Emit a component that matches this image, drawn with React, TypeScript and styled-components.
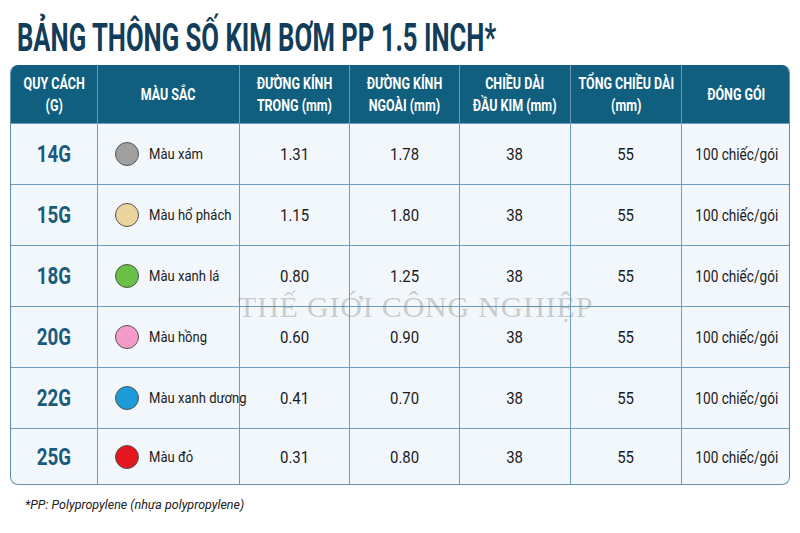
import { Fragment } from "react";
import styled, { createGlobalStyle } from "styled-components";

const GlobalStyle = createGlobalStyle`
  html, body {
    margin: 0;
    padding: 0;
    background: #ffffff;
  }
  body {
    font-family: Roboto, "Liberation Sans", sans-serif;
  }
`;

const Page = styled.div`
  width: 800px;
  height: 533px;
  padding: 19px 10px 0 10px;
  box-sizing: border-box;
  position: relative;
  overflow: hidden;
`;

const Title = styled.h1`
  margin: 0 0 0 7px;
  height: 46px;
  font-family: Roboto, "Liberation Sans", sans-serif;
  font-weight: 700;
  font-size: 38px;
  line-height: 38px;
  color: #123d5a;
  white-space: nowrap;
  transform: scaleX(0.675);
  transform-origin: left center;
`;

const Table = styled.div`
  display: grid;
  grid-template-columns: 87px 142px 110px 110px 111px 111px 109px;
  width: 780px;
  border: 1px solid #5f8fac;
  border-top: none;
  border-radius: 8px;
  overflow: hidden;
  background: #f2f7fb;
  box-sizing: border-box;
`;

const HeadCell = styled.div<{ $end?: boolean }>`
  height: 58px;
  box-sizing: border-box;
  padding-top: 2px;
  background: #115f7f;
  color: #ffffff;
  display: flex;
  align-items: center;
  justify-content: center;
  text-align: center;
  font-weight: 700;
  font-size: 16px;
  line-height: 22px;
  border-right: ${(p) => (p.$end ? "none" : "1px solid #6b98b2")};
`;

const Squeeze = styled.span<{ $ratio?: number }>`
  display: inline-block;
  transform: scaleX(${(p) => p.$ratio ?? 0.8});
  white-space: nowrap;
`;

const Cell = styled.div<{ $last?: boolean; $end?: boolean }>`
  height: ${(p) => (p.$last ? 56 : 61)}px;
  box-sizing: border-box;
  display: flex;
  align-items: center;
  justify-content: center;
  border-top: 1px solid #6f9dbb;
  border-right: ${(p) => (p.$end ? "none" : "1px solid #6f9dbb")};
  font-size: 17px;
  color: #1b1b1b;
`;

const SizeCell = styled(Cell)`
  font-weight: 700;
  font-size: 24px;
  color: #1a5b7c;
`;

const ColorCell = styled(Cell)`
  justify-content: flex-start;
  padding-left: 17px;
  gap: 10px;
`;

const Dot = styled.span<{ $color: string }>`
  width: 24px;
  height: 24px;
  border-radius: 50%;
  background: ${(p) => p.$color};
  border: 1px solid #555;
  box-sizing: border-box;
  flex: none;
`;

const ColorName = styled.span`
  font-size: 15px;
  display: inline-block;
  transform: scaleX(0.87);
  transform-origin: left center;
  white-space: nowrap;
`;

const Note = styled.p`
  margin: 12px 0 0 15px;
  font-size: 13px;
  font-style: italic;
  color: #222;
  transform: scaleX(0.96);
  transform-origin: left center;
  white-space: nowrap;
`;

const Watermark = styled.div`
  position: absolute;
  left: 238px;
  top: 290px;
  font-family: "Liberation Serif", serif;
  font-size: 30px;
  color: rgba(110, 110, 110, 0.32);
  letter-spacing: 0.8px;
  white-space: nowrap;
  pointer-events: none;
`;

const headers = [
  ["QUY CÁCH", "(G)"],
  ["MÀU SẮC"],
  ["ĐƯỜNG KÍNH", "TRONG (mm)"],
  ["ĐƯỜNG KÍNH", "NGOÀI (mm)"],
  ["CHIỀU DÀI", "ĐẦU KIM (mm)"],
  ["TỔNG CHIỀU DÀI", "(mm)"],
  ["ĐÓNG GÓI"],
];

const rows = [
  { size: "14G", color: "#a0a0a0", name: "Màu xám", inner: "1.31", outer: "1.78" },
  { size: "15G", color: "#ecd59c", name: "Màu hổ phách", inner: "1.15", outer: "1.80" },
  { size: "18G", color: "#6abf45", name: "Màu xanh lá", inner: "0.80", outer: "1.25" },
  { size: "20G", color: "#f39cc8", name: "Màu hồng", inner: "0.60", outer: "0.90" },
  { size: "22G", color: "#1d9bd8", name: "Màu xanh dương", inner: "0.41", outer: "0.70" },
  { size: "25G", color: "#e3161e", name: "Màu đỏ", inner: "0.31", outer: "0.80" },
];

export default function App() {
  return (
    <>
      <GlobalStyle />
      <Page>
        <Title>BẢNG THÔNG SỐ KIM BƠM PP 1.5 INCH*</Title>
        <Table>
          {headers.map((lines, i) => (
            <HeadCell key={i} $end={i === headers.length - 1}>
              <Squeeze $ratio={0.78}>
                {lines.map((l, j) => (
                  <div key={j}>{l}</div>
                ))}
              </Squeeze>
            </HeadCell>
          ))}
          {rows.map((r, i) => {
            const last = i === rows.length - 1;
            return (
              <Fragment key={r.size}>
                <SizeCell $last={last}>
                  <Squeeze $ratio={0.78}>{r.size}</Squeeze>
                </SizeCell>
                <ColorCell $last={last}>
                  <Dot $color={r.color} />
                  <ColorName>{r.name}</ColorName>
                </ColorCell>
                <Cell $last={last}>
                  <Squeeze $ratio={0.88}>{r.inner}</Squeeze>
                </Cell>
                <Cell $last={last}>
                  <Squeeze $ratio={0.88}>{r.outer}</Squeeze>
                </Cell>
                <Cell $last={last}>
                  <Squeeze $ratio={0.88}>38</Squeeze>
                </Cell>
                <Cell $last={last}>
                  <Squeeze $ratio={0.88}>55</Squeeze>
                </Cell>
                <Cell $last={last} $end>
                  <Squeeze $ratio={0.8}>100 chiếc/gói</Squeeze>
                </Cell>
              </Fragment>
            );
          })}
        </Table>
        <Note>*PP: Polypropylene (nhựa polypropylene)</Note>
        <Watermark>THẾ GIỚI CÔNG NGHIỆP</Watermark>
      </Page>
    </>
  );
}
